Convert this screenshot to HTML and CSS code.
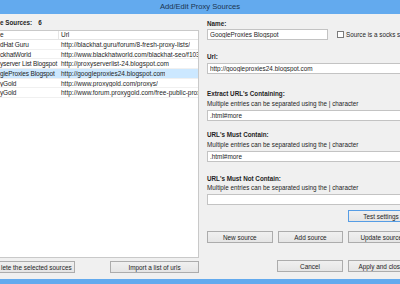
FILE: index.html
```html
<!DOCTYPE html>
<html lang="en">
<head>
    <meta charset="UTF-8">
    <title>Add/Edit Proxy Sources</title>
    <link rel="stylesheet" href="styles.css">
</head>
<body>
    <div class="window">
        <div class="titlebar">Add/Edit Proxy Sources</div>

        <div class="content">
            <!-- список источников -->
            <div class="left">
                <div class="count"><b>e Sources:</b><b class="num">6</b></div>
                <div class="list">
                    <div class="list-head">
                        <span class="c1">e</span>
                        <span class="c2">Url</span>
                    </div>
                    <div class="list-row">
                        <span class="c1">dHat Guru</span>
                        <span class="c2">http://blackhat.guru/forum/8-fresh-proxy-lists/</span>
                    </div>
                    <div class="list-row">
                        <span class="c1">ckhatWorld</span>
                        <span class="c2">http://www.blackhatworld.com/blackhat-seo/f103-proxy-lists/</span>
                    </div>
                    <div class="list-row">
                        <span class="c1">yserver List Blogspot</span>
                        <span class="c2">http://proxyserverlist-24.blogspot.com</span>
                    </div>
                    <div class="list-row selected">
                        <span class="c1">gleProxies Blogspot</span>
                        <span class="c2">http://googleproxies24.blogspot.com</span>
                    </div>
                    <div class="list-row">
                        <span class="c1">yGold</span>
                        <span class="c2">http://www.proxygold.com/proxys/</span>
                    </div>
                    <div class="list-row">
                        <span class="c1">yGold</span>
                        <span class="c2">http://www.forum.proxygold.com/free-public-proxy-lists/</span>
                    </div>
                </div>
                <div class="left-buttons">
                    <button class="btn btn-delete">lete the selected sources</button>
                    <button class="btn btn-import">Import a list of urls</button>
                </div>
            </div>

            <!-- форма редактирования -->
            <div class="right">
                <label class="lbl">Name:</label>
                <div class="name-row">
                    <input class="field field-name" type="text" value="GoogleProxies Blogspot">
                    <span class="check"></span>
                    <span class="check-text">Source is a socks source</span>
                </div>

                <label class="lbl lbl-url">Url:</label>
                <input class="field field-url" type="text" value="http://googleproxies24.blogspot.com">

                <label class="lbl lbl-group1">Extract URL's Containing:</label>
                <div class="hint">Multiple entries can be separated using the | character</div>
                <input class="field field-group" type="text" value=".html#more">

                <label class="lbl lbl-group2">URL's Must Contain:</label>
                <div class="hint">Multiple entries can be separated using the | character</div>
                <input class="field field-group" type="text" value=".html#more">

                <label class="lbl lbl-group3">URL's Must Not Contain:</label>
                <div class="hint hint-tight">Multiple entries can be separated using the | character</div>
                <input class="field field-group field-last" type="text" value="">

                <div class="btn-row test-row">
                    <button class="btn btn-default">Test settings</button>
                </div>
                <div class="btn-row source-row">
                    <button class="btn">New source</button>
                    <button class="btn">Add source</button>
                    <button class="btn">Update source</button>
                </div>
                <div class="btn-row close-row">
                    <button class="btn">Cancel</button>
                    <button class="btn">Apply and close</button>
                </div>
            </div>
        </div>

        <div class="bottom-border"></div>
    </div>
</body>
</html>
```

FILE: styles.css
```css
* {
    box-sizing: border-box;
}
body {
    margin: 0;
    width: 400px;
    height: 284px;
    overflow: hidden;
    font-family: "Liberation Sans", Arial, sans-serif;
    font-size: 6.3px;
    color: #1e1e1e;
    background-color: #f0f0f0;
}
.window {
    display: flex;
    flex-direction: column;
    height: 284px;
}
.titlebar {
    height: 14px;
    line-height: 14px;
    flex-shrink: 0;
    background-color: #63aaee;
    color: #1c3550;
    font-size: 7.6px;
    text-align: center;
}
.content {
    flex: 1;
    display: flex;
    gap: 8px;
    padding-top: 5px;
    overflow: hidden;
}
.bottom-border {
    height: 5px;
    flex-shrink: 0;
    background-color: #63aaee;
}

/* левая колонка */
.left {
    width: 199px;
    flex-shrink: 0;
    display: flex;
    flex-direction: column;
}
.count {
    height: 8px;
    line-height: 8px;
    margin-bottom: 3px;
}
.count .num {
    margin-left: 6px;
}
.list {
    height: 228px;
    background-color: #fff;
    border: 1px solid #c9c9c9;
    border-left: none;
    overflow: hidden;
    font-size: 6.5px;
}
.list-head,
.list-row {
    display: flex;
    white-space: nowrap;
}
.list-head {
    height: 9px;
    line-height: 8px;
    border-bottom: 1px solid #e5e5e5;
}
.list-row {
    height: 9.7px;
    line-height: 9px;
    border-bottom: 1px solid #f0f0f0;
}
.list-row.selected {
    background-color: #cce8ff;
}
.c1 {
    width: 58px;
    flex-shrink: 0;
    overflow: hidden;
    letter-spacing: -0.15px;
}
.c2 {
    padding-left: 3px;
    overflow: hidden;
}
.list-head .c2 {
    border-left: 1px solid #e5e5e5;
    padding-left: 2px;
    flex: 1;
}
.left-buttons {
    display: flex;
    justify-content: space-between;
    margin-top: 3px;
}
.btn {
    height: 12px;
    padding: 0;
    font-family: inherit;
    font-size: 6.4px;
    color: #1e1e1e;
    white-space: nowrap;
    background: linear-gradient(#f0f0f0, #e5e5e5);
    border: 1px solid #acacac;
}
.btn-delete {
    width: 75px;
    border-left: none;
    text-align: left;
    padding-left: 1px;
    overflow: hidden;
}
.btn-import {
    width: 89px;
}

/* правая колонка */
.right {
    width: 207px;
    flex-shrink: 0;
    display: flex;
    flex-direction: column;
    align-items: flex-start;
}
.lbl {
    font-weight: bold;
    height: 9px;
    line-height: 9px;
}
.name-row {
    display: flex;
    align-items: center;
    margin-top: 1px;
}
.field {
    height: 11px;
    padding: 0 2px;
    font-family: inherit;
    font-size: 6.4px;
    color: #1e1e1e;
    background-color: #fff;
    border: 1px solid #c3c3c3;
    outline: none;
}
.field-name {
    width: 121px;
}
.check {
    width: 7px;
    height: 7px;
    margin-left: 9px;
    flex-shrink: 0;
    background-color: #fff;
    border: 1px solid #7a7a7a;
}
.check-text {
    margin-left: 2px;
    white-space: nowrap;
}
.lbl-url {
    margin-top: 12px;
}
.field-url,
.field-group {
    width: 207px;
    margin-top: 2px;
}
.lbl-group1 {
    margin-top: 15px;
}
.lbl-group2 {
    margin-top: 9px;
}
.lbl-group3 {
    margin-top: 12px;
}
.hint {
    height: 8px;
    line-height: 8px;
    margin-top: 2px;
    white-space: nowrap;
}
.hint-tight {
    margin-top: 1px;
}
.field-last {
    margin-top: 2px;
}
.btn-row {
    display: flex;
    gap: 5px;
    width: 207px;
    justify-content: flex-end;
}
.btn-row .btn {
    width: 66px;
}
.test-row {
    margin-top: 5px;
}
.btn-default {
    border-color: #569de5;
}
.source-row {
    margin-top: 9px;
}
.close-row {
    margin-top: 17px;
}
```
